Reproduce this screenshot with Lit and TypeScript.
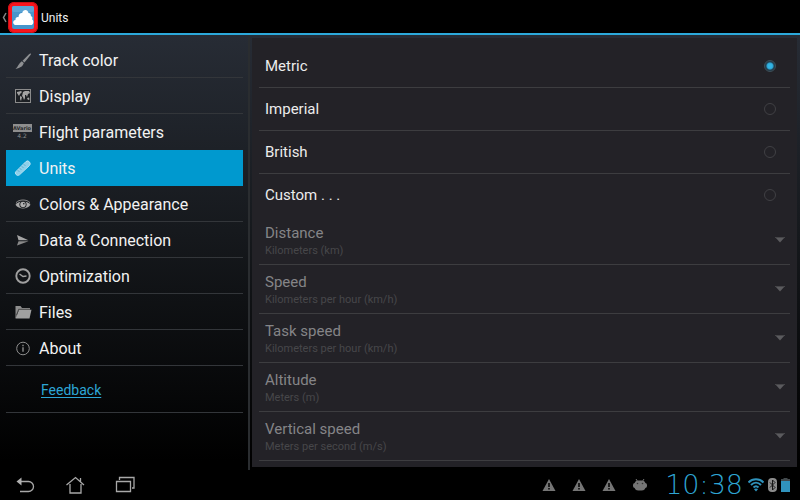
import { LitElement, html, css, svg, nothing } from "lit";
import { customElement, property, state } from "lit/decorators.js";
import { classMap } from "lit/directives/class-map.js";

const icons: Record<string, unknown> = {
  brush: svg`<path d="M17.500 1.500c.6 0 .6.600.2 1.200L11.500 10.500 9.500 8.700 16 2.300C16.500 1.800 17 1.500 17.500 1.500z" fill="#8d8f92"/><path d="M8.800 9.300l2 1.800c-.8 2.900-3 4.900-8.300 5.900C5 15 5.800 11 8.800 9.300z" fill="#8d8f92"/>`,
  map: svg`<rect x="2.500" y="1.500" width="15" height="13" fill="#1c1f23" stroke="#8b8b8b"/><path d="M4 4l4-1 1 1-2 2-1 2-2-3zM7 8l2 1-1 4-1-2zM10 4l2-1h4l1 2-2 1-1 3-1-2-1 0v3l-1 2-1-3-1-1zM14 10l2-.5.5 2-1.500.5z" fill="#a2a2a2"/>`,
  vario: svg`<rect x="0" y="0" width="19" height="8" fill="#8e8e8e"/><text x="9" y="6" class="tag dark">AVario</text><text x="9" y="14" class="tag light">4.2</text>`,
  ruler: svg`<path d="M13 1.500Q15 0 16.500 2t0 3.500L6.500 14.800Q4.500 16.200 3 14.500t0-3z" fill="#8fd0ea" stroke="#b8e2f3"/><path d="M5 10.500l1 1M7 8.500l1 1M9 6.500l1 1M11 4.500l1 1" stroke="#3a8fb4"/>`,
  eye: svg`<path d="M2.500 8.700C6 4.300 14 4.300 17.500 8.700c-3.500 5-11.500 5-15 0z" fill="#a9a9a9"/><circle cx="10" cy="8.500" r="3.600" fill="#17191c"/><circle cx="10" cy="8.500" r="2.700" fill="#b0b0b0"/><circle cx="10.800" cy="7.700" r=".8" fill="#17191c"/><path d="M3 6.700C6 3.100 14 3.100 17 6.700" stroke="#8c8c8c" fill="none"/>`,
  send: svg`<path d="M4 3l11.500 5.300H5.500z" fill="#a4a4a4"/><path d="M4 13.500l1.500-4.300h10z" fill="#8a8a8a"/>`,
  clock: svg`<circle cx="10" cy="8" r="6.700" fill="none" stroke="#a0a0a0" stroke-width="1.900"/><path d="M6.500 6L10 8.500l3.500-.5" stroke="#a0a0a0" stroke-width="1.500" fill="none"/>`,
  folder: svg`<path d="M2.500 2h5l1.500 2h8v2H6L3.500 11.500V14h-1z" fill="#8e8e8e"/><path d="M6 5.700h12.500L16.500 14.500h-14z" fill="#a0a0a0"/><path d="M3.500 11L5.700 5.300H17" stroke="#2b2b2b" stroke-width=".7" fill="none"/>`,
  info: svg`<circle cx="10" cy="8.500" r="6.300" fill="none" stroke="#8e8e8e"/><path d="M10 7.200v4.500M10 4.800v1.400" stroke="#a2a2a2" stroke-width="1.200"/>`,
};

const sections = [
  ["brush", "Track color"],
  ["map", "Display"],
  ["vario", "Flight parameters"],
  ["ruler", "Units"],
  ["eye", "Colors & Appearance"],
  ["send", "Data & Connection"],
  ["clock", "Optimization"],
  ["folder", "Files"],
  ["info", "About"],
];

const systems = ["Metric", "Imperial", "British", "Custom . . ."];

const quantities = [
  ["distance", "Distance", "Kilometers (km)"],
  ["speed", "Speed", "Kilometers per hour (km/h)"],
  ["task-speed", "Task speed", "Kilometers per hour (km/h)"],
  ["altitude", "Altitude", "Meters (m)"],
  ["vertical-speed", "Vertical speed", "Meters per second (m/s)"],
];

@customElement("title-bar")
class TitleBar extends LitElement {
  @property() heading = "";

  static styles = css`
    :host { display: block; }
    header { display: flex; align-items: flex-end; height: 33px; background: #000; border-bottom: 2px solid #2ca9db; }
    button { display: flex; align-items: center; border: 0; padding: 0; background: none; }
    h1 { margin: 0 0 0 2px; font-size: 12px; line-height: 30px; font-weight: 400; color: #f0f0f0; }
    svg { display: block; }
  `;

  render() {
    return html`<header>
      <button aria-label="Back">
        <svg width="39" height="32" viewBox="0 0 39 32">
          <path d="M6 12L3.500 16.500 6 21" fill="none" stroke="#858585" stroke-width="1.500" />
          <rect x="8" y="1" width="30" height="31" rx="6" fill="#f8141c" />
          <rect x="8.500" y="1.500" width="29" height="30" rx="6" fill="none" stroke="#c81015" />
          <rect x="12" y="5" width="22" height="23" rx="2" fill="#4795cb" />
          <rect x="12" y="5" width="22" height="6" rx="2" fill="#5ba4d5" />
          <path d="M15 24c-2.500-1-2.500-4.500.5-5-.4-2 1.500-3.300 3-2.800.2-3.400 2-4.500 3.700-4.200.6-3.600 5.500-4.400 6.300 0 1.900 0 2.700 1.500 2.300 3 2 .6 1.900 2.400 1.200 3.200 2 1.400 1.800 4.800-.3 5.800z" fill="#fff" />
        </svg>
      </button>
      <h1>${this.heading}</h1>
    </header>`;
  }
}

@customElement("section-list")
class SectionList extends LitElement {
  @property() current = "";

  static styles = css`
    :host { display: block; padding: 7px 5px 0 6px; border-right: 2px solid #2a2d30; }
    ul { list-style: none; margin: 0; padding: 0; }
    li { border-bottom: 1px solid #33363a; }
    li.active { background: #0099cf; border-color: #0099cf; }
    li.before { border-color: transparent; }
    button { display: flex; align-items: center; gap: 6px; width: 100%; height: 35px; padding: 3px 0 0 7px; border: 0; background: none; color: #f2f2f2; font: inherit; font-size: 16px; text-align: left; }
    svg { flex: none; }
    .tag { font-family: "DejaVu Sans", sans-serif; font-size: 5px; font-weight: 700; text-anchor: middle; }
    .dark { fill: #26282b; }
    .light { fill: #8e8e8e; font-size: 6px; font-weight: 400; }
    .feedback { display: flex; align-items: center; height: 44px; padding: 2px 0 0 35px; }
    a { color: #2da6d6; font-size: 14px; text-underline-offset: 2px; }
  `;

  render() {
    const at = sections.findIndex(([, name]) => name === this.current);
    return html`<nav>
      <ul>
        ${sections.map(
          ([icon, name], i) => html`<li class=${classMap({ active: i === at, before: i === at - 1 })}>
            <button aria-current=${i === at ? "page" : nothing}>
              <svg width="20" height="18" viewBox="0 0 20 18" aria-hidden="true">${icons[icon]}</svg>
              <span>${name}</span>
            </button>
          </li>`
        )}
        <li class="feedback"><a href="#feedback">Feedback</a></li>
      </ul>
    </nav>`;
  }
}

@customElement("unit-settings")
class UnitSettings extends LitElement {
  @state() private system = "Metric";

  static styles = css`
    :host { display: block; }
    fieldset { margin: 0; padding: 0; border: 0; min-width: 0; }
    .choice { display: flex; align-items: center; justify-content: space-between; height: 42px; padding: 0 14px 0 6px; border-bottom: 1px solid #3d3d40; color: #ececec; }
    .choice:last-child { border-bottom: 0; }
    .choice input { appearance: none; width: 12px; height: 12px; margin: 0; border: 1px solid #404044; border-radius: 50%; }
    .choice input:checked { border-color: #3d5059; background: radial-gradient(circle, #33b5e5 0 2px, #2c9fcb 3px, #20455a 4px, #24343e 5px); }
    .quantity { display: flex; align-items: center; justify-content: space-between; height: 48px; padding: 0 5px 0 6px; border-bottom: 1px solid #3d3d40; }
    .field { display: flex; flex-direction: column; padding-top: 2px; }
    label { line-height: 20px; }
    .field label { color: #858587; }
    select { appearance: none; margin: 0; padding: 0; border: 0; background: none; color: #47474a; opacity: 1; font: inherit; font-size: 11px; line-height: 16px; }
  `;

  render() {
    return html`
      <fieldset aria-label="Unit system">
        ${systems.map(
          (name) => html`<label class="choice">
            <span>${name}</span>
            <input type="radio" name="system" .checked=${this.system === name} @change=${() => (this.system = name)} />
          </label>`
        )}
      </fieldset>
      ${quantities.map(
        ([id, name, unit]) => html`<div class="quantity">
          <div class="field">
            <label for=${id}>${name}</label>
            <select id=${id} ?disabled=${this.system !== "Custom . . ."}><option>${unit}</option></select>
          </div>
          <svg width="10" height="6" viewBox="0 0 10 6" aria-hidden="true">
            <path d="M0 0h10L5 5.500z" fill="#5b5b5e" /><path d="M0 .5h10" stroke="#454548" />
          </svg>
        </div>`
      )}
    `;
  }
}

@customElement("system-bar")
class SystemBar extends LitElement {
  static styles = css`
    :host { display: flex; align-items: center; justify-content: space-between; height: 30px; padding: 0 10px 0 15px; background: #000; }
    .keys { display: flex; gap: 30px; }
    button { padding: 0; border: 0; background: none; }
    svg { display: block; }
    .status { display: flex; align-items: center; }
    .notices { display: flex; gap: 16px; margin-right: 17px; }
    time { font: 200 27px/30px "DejaVu Sans", sans-serif; color: #2ea5d3; }
    .signals { display: flex; align-items: center; gap: 4px; margin-left: 5px; }
  `;

  private warning() {
    return html`<svg width="14" height="14" viewBox="0 0 14 14" role="img" aria-label="Warning">
      <path d="M7 1l6.500 12H.5z" fill="#757575" /><path d="M7 5v4M7 10v1.500" stroke="#000" stroke-width="1.500" />
    </svg>`;
  }

  render() {
    return html`
      <div class="keys">
        <button aria-label="Back"><svg width="20" height="20" viewBox="0 0 20 20">
          <path d="M5 6.500h8.500a5 5 0 0 1 0 10H5" fill="none" stroke="#a8a8a8" stroke-width="1.300" /><path d="M1.500 6.500L6.500 2.500v8z" fill="#b0b0b0" />
        </svg></button>
        <button aria-label="Home"><svg width="20" height="20" viewBox="0 0 20 20">
          <path d="M1.500 10L10.500 2.500 19 10M5 9v9h11V9M15.500 6.500V3" fill="none" stroke="#a8a8a8" stroke-width="1.300" />
        </svg></button>
        <button aria-label="Recent apps"><svg width="20" height="20" viewBox="0 0 20 20">
          <path d="M1.500 6.500h14v10h-14zM4.500 5V2.500h14.500V13H17" fill="none" stroke="#a8a8a8" stroke-width="1.300" />
        </svg></button>
      </div>
      <div class="status">
        <div class="notices">
          ${[0, 1, 2].map(() => this.warning())}
          <svg width="16" height="14" viewBox="0 0 16 14" role="img" aria-label="Debugging">
            <path d="M4 1l1.300 2M12 1l-1.300 2" stroke="#757575" /><rect x="2.500" y="2.500" width="11" height="10" rx="4" fill="#757575" /><rect x="1" y="5" width="14" height="5" rx="2" fill="#757575" />
            <circle cx="5.500" cy="5.500" r=".8" fill="#333" /><circle cx="10.500" cy="5.500" r=".8" fill="#333" />
          </svg>
        </div>
        <time>10:38</time>
        <div class="signals">
          <svg width="16" height="14" viewBox="0 0 16 14" role="img" aria-label="Wi-Fi">
            <path d="M.5 4.500C4.500.3 11.500.3 15.500 4.500M3 7c3-3 7-3 10 0M5.500 9.500c1.500-1.500 3.500-1.500 5 0" fill="none" stroke="#2f92bb" stroke-width="2" /><path d="M6 11.200c1-1 3-1 4 0l-2 2.300z" fill="#2f92bb" />
          </svg>
          <svg width="9" height="14" viewBox="0 0 9 14" role="img" aria-label="Bluetooth">
            <rect width="9" height="14" rx="4" fill="#8c8c8c" /><path d="M2 4.500l5 5L4.500 12V2L7 4.500l-5 5" fill="none" stroke="#151515" />
          </svg>
          <svg width="9" height="14" viewBox="0 0 9 14" role="img" aria-label="Battery">
            <path d="M2.500 0h4v1H9v2H0V1h2.500z" fill="#42494c" /><path d="M0 3h9v11H0z" fill="#3093bd" />
          </svg>
        </div>
      </div>
    `;
  }
}

@customElement("app-root")
class AppRoot extends LitElement {
  static styles = css`
    :host { display: grid; grid-template-rows: auto 1fr auto; min-height: 100vh; background: #000; font: 15px/20px Roboto, sans-serif; }
    main { display: grid; grid-template-columns: 5fr 11fr; background: linear-gradient(#272c35, #16191d 45%, #000 98%); }
    .panel { margin: 3px 3px 3px 2px; padding: 7px 7px 6px; background: #232227; }
  `;

  render() {
    return html`
      <title-bar heading="Units"></title-bar>
      <main>
        <section-list current="Units"></section-list>
        <unit-settings class="panel"></unit-settings>
      </main>
      <system-bar></system-bar>
    `;
  }
}
